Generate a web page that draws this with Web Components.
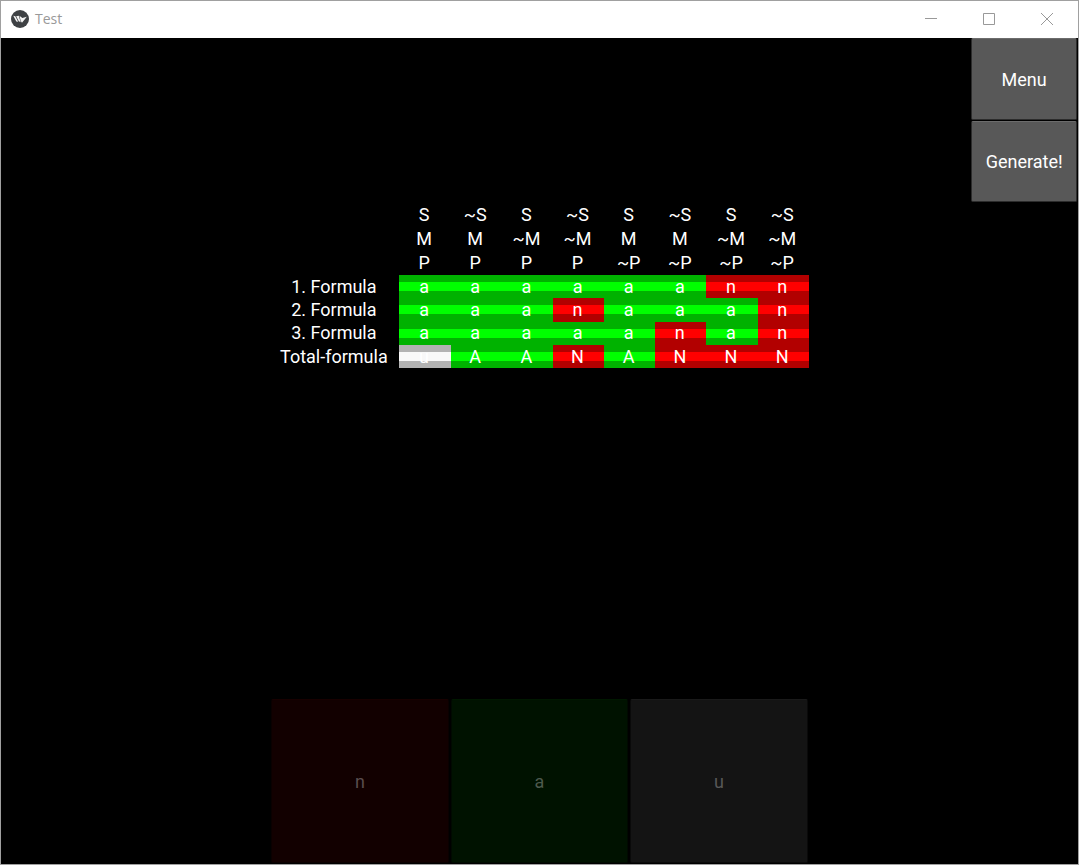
<!DOCTYPE html>
<html lang="en">
<head>
<meta charset="utf-8">
<meta name="viewport" content="width=device-width, initial-scale=1">
<title>Test</title>
<style>
html, body { height: 100%; margin: 0; background: #000; }
body { font-family: Roboto, sans-serif; font-size: 18px; color: #fff; }
</style>
</head>
<body>
<app-window heading="Test">
  <side-menu slot="menu">
    <app-button>Menu</app-button>
    <app-button>Generate!</app-button>
  </side-menu>
  <truth-table slot="table"></truth-table>
  <answer-bar slot="answers">
    <app-button tone="n" disabled>n</app-button>
    <app-button tone="a" disabled>a</app-button>
    <app-button tone="u" disabled>u</app-button>
  </answer-bar>
</app-window>
<script>
class AppWindow extends HTMLElement {
  constructor() {
    super();
    this.attachShadow({ mode: 'open' }).innerHTML = `
      <style>
        :host { display: flex; flex-direction: column; box-sizing: border-box; height: 100%; border: 1px solid #a0a0a0; background: #000; }
        header { display: flex; align-items: center; flex: none; box-sizing: border-box; height: 37px; padding: 0 2px 1px 10px; background: #fff; color: #999; }
        h1 { flex: 1; margin: 0 0 0 6px; font: 400 14px/20px "Open Sans", sans-serif; }
        header button { display: grid; place-items: center; width: 58px; height: 36px; padding: 0; border: 0; background: none; color: #999; }
        header svg { display: block; }
        main { flex: 1; min-height: 0; display: grid; grid-template-columns: 25% 50% 15% 10%; grid-template-rows: 20% 20% 40% 20%; }
        slot { display: block; min-width: 0; min-height: 0; }
        .menu { grid-area: 1 / 4; }
        .table { grid-area: 2 / 2; }
        .answers { grid-area: 4 / 2; }
      </style>
      <header>
        <svg width="18" height="18" viewBox="0 0 19 19" aria-hidden="true">
          <circle cx="9.500" cy="9.500" r="9.500" fill="#3e4144"/>
          <path fill="#f4f4f4" d="M2.400 6 4.600 6.700 6.600 10.600 7.600 12.500 5.600 12.200zM5.400 6.600 8.200 6 10.200 12.800 8.200 12zM8.900 6 12 8.500 16.700 7.200 11.600 13.400 10.300 11.500z"/>
        </svg>
        <h1></h1>
        <button type="button" aria-label="Minimize"><svg width="12" height="12" fill="none" stroke="currentColor"><path d="M0 5.500H12"/></svg></button>
        <button type="button" aria-label="Maximize"><svg width="12" height="12" fill="none" stroke="currentColor"><path d="M.5.500h11v11H.5z"/></svg></button>
        <button type="button" aria-label="Close"><svg width="12" height="12" fill="none" stroke="currentColor"><path d="M0 0 12 12M12 0 0 12"/></svg></button>
      </header>
      <main>
        <slot class="menu" name="menu"></slot>
        <slot class="table" name="table"></slot>
        <slot class="answers" name="answers"></slot>
      </main>`;
    this.shadowRoot.querySelector('h1').textContent = this.getAttribute('heading');
  }
}

class SideMenu extends HTMLElement {
  constructor() {
    super();
    this.attachShadow({ mode: 'open' }).innerHTML = `
      <style>
        :host { display: grid; grid-template-rows: 1fr 1fr; height: 100%; }
      </style>
      <slot></slot>`;
  }
}

class AnswerBar extends HTMLElement {
  constructor() {
    super();
    this.attachShadow({ mode: 'open' }).innerHTML = `
      <style>
        :host { display: grid; grid-template-columns: repeat(3, 1fr); height: 100%; }
      </style>
      <slot></slot>`;
  }
}

class AppButton extends HTMLElement {
  constructor() {
    super();
    this.attachShadow({ mode: 'open' }).innerHTML = `
      <style>
        :host { display: block; box-sizing: border-box; padding: 0 1px 1px; --fill: #585858; --edge: #6c6c6c; --rim: #2c2c2c; --ink: #fff; }
        :host([tone=n]) { --fill: #120000; --edge: #180000; --rim: #0a0000; --ink: #594d4d; }
        :host([tone=a]) { --fill: #001200; --edge: #001800; --rim: #000a00; --ink: #4d594d; }
        :host([tone=u]) { --fill: #141414; --edge: #1a1a1a; --rim: #0a0a0a; --ink: #585858; }
        button { display: block; width: 100%; height: 100%; padding: 1px 0 0; border: 1px solid var(--rim); border-top-color: var(--edge); border-radius: 2px; background: var(--fill); color: var(--ink); font: inherit; }
      </style>
      <button type="button"><slot></slot></button>`;
    this.shadowRoot.querySelector('button').disabled = this.hasAttribute('disabled');
  }
}

class TruthTable extends HTMLElement {
  constructor() {
    super();
    const heads = [
      ['S', '~S', 'S', '~S', 'S', '~S', 'S', '~S'],
      ['M', 'M', '~M', '~M', 'M', 'M', '~M', '~M'],
      ['P', 'P', 'P', 'P', '~P', '~P', '~P', '~P'],
    ];
    const rows = [
      ['1. Formula', 'aaaaaann'],
      ['2. Formula', 'aaanaaan'],
      ['3. Formula', 'aaaaanan'],
      ['Total-formula', 'uAANANNN'],
    ];
    this.attachShadow({ mode: 'open' }).innerHTML = `
      <style>
        :host { display: block; height: 100%; }
        table { width: 100%; height: 100%; table-layout: fixed; border-collapse: collapse; text-align: center; line-height: 20px; }
        thead { line-height: 24px; }
        col.label { width: 24%; }
        th, td { padding: 0 2px 0 0; font-weight: 400; }
        td { background: linear-gradient(var(--dim) 31%, var(--lit) 31% 68%, var(--dim) 68%); }
        .a { --dim: #00b200; --lit: #0f0; }
        .n { --dim: #b20000; --lit: #f00; }
        .u { --dim: #b2b2b2; --lit: #f8f8f8; }
      </style>
      <table>
        <colgroup><col class="label"><col span="8"></colgroup>
        <thead>${heads.map(r => `<tr><th></th>${r.map(c => `<th scope="col">${c}</th>`).join('')}</tr>`).join('')}</thead>
        <tbody>${rows.map(([name, v]) => `<tr><th scope="row">${name}</th>${[...v].map(c => `<td class="${c.toLowerCase()}">${c}</td>`).join('')}</tr>`).join('')}</tbody>
      </table>`;
  }
}

customElements.define('app-button', AppButton);
customElements.define('side-menu', SideMenu);
customElements.define('answer-bar', AnswerBar);
customElements.define('truth-table', TruthTable);
customElements.define('app-window', AppWindow);
</script>
</body>
</html>
